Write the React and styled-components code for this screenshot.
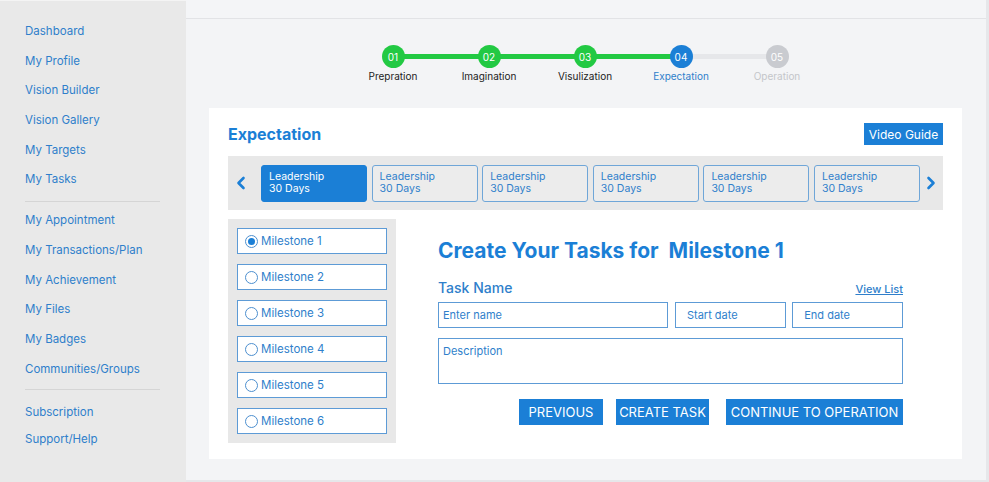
import React from 'react';
import styled, { createGlobalStyle } from 'styled-components';

const GlobalStyle = createGlobalStyle`
  html, body { margin: 0; padding: 0; }
  body {
    font-family: Inter, "Noto Sans", sans-serif;
    background: #f3f4f6;
  }
  * { box-sizing: border-box; }
`;

const BLUE = '#1b7fd6';
const TEXT_BLUE = '#2f7fcb';

const Page = styled.div`
  display: flex;
  width: 989px;
  height: 482px;
  overflow: hidden;
`;

const Sidebar = styled.nav`
  width: 186px;
  flex-shrink: 0;
  background: #e9e9e9;
  padding: 21px 0 0 25px;
  border-top: 1px solid #f4f4f4;
`;

const NavItem = styled.div`
  font-size: 11.5px;
  color: ${TEXT_BLUE};
  height: ${(p) => p.h || 29.7}px;
  line-height: 18px;
  white-space: nowrap;
`;

const Divider = styled.div`
  width: 135px;
  height: 1px;
  background: #d5d5d5;
  margin: ${(p) => p.m};
`;

const Main = styled.main`
  width: 803px;
  min-width: 0;
  display: flex;
  flex-direction: column;
  border-right: 3px solid #e6e7ea;
  border-bottom: 2px solid #e6e7ea;
`;

const TopBar = styled.div`
  height: 19px;
  border-bottom: 1px solid #e2e3e6;
  background: #f4f5f7;
`;

const Stepper = styled.div`
  display: flex;
  justify-content: center;
  padding: 26px 2px 0 0;
  height: 89px;
`;

const Step = styled.div`
  width: 96px;
  display: flex;
  flex-direction: column;
  align-items: center;
  position: relative;
`;

const Connector = styled.div`
  position: absolute;
  top: 9px;
  left: 48px;
  width: 96px;
  height: 5px;
  background: ${(p) => (p.done ? '#22c943' : '#e6e7ea')};
`;

const Circle = styled.div`
  width: 23px;
  height: 23px;
  border-radius: 50%;
  background: ${(p) => p.bg};
  color: #fff;
  font-size: 10px;
  display: flex;
  align-items: center;
  justify-content: center;
  position: relative;
  z-index: 1;
`;

const StepLabel = styled.div`
  margin-top: 2px;
  font-size: 10px;
  color: ${(p) => p.color};
`;

const Card = styled.section`
  margin-left: 23px;
  width: 753px;
  background: #fff;
  height: 351px;
  padding: 12px 19px 0 19px;
`;

const CardHeader = styled.div`
  display: flex;
  justify-content: space-between;
  align-items: center;
  height: 28px;
`;

const Title = styled.h2`
  margin: 0;
  font-size: 16px;
  font-weight: 700;
  color: ${BLUE};
`;

const BlueButton = styled.button`
  border: none;
  background: ${BLUE};
  color: #fff;
  font-family: inherit;
  font-size: ${(p) => p.size || 13}px;
  height: ${(p) => p.h || 26}px;
  padding: 0;
  width: ${(p) => p.w}px;
  margin-left: ${(p) => p.ml || 0}px;
  white-space: nowrap;
  cursor: pointer;
`;

const Carousel = styled.div`
  margin-top: 8px;
  height: 54px;
  background: #e8e8e8;
  display: flex;
  align-items: center;
`;

const Arrow = styled.div`
  width: ${(p) => p.w}px;
  display: flex;
  justify-content: ${(p) => p.justify};
  padding: 0 ${(p) => p.pad}px;
  color: ${BLUE};
`;

const Tabs = styled.div`
  display: flex;
  gap: 4.6px;
`;

const Tab = styled.div`
  width: 106px;
  height: 37px;
  border-radius: 3px;
  border: 1px solid ${(p) => (p.active ? BLUE : '#6fa6d8')};
  background: ${(p) => (p.active ? BLUE : '#ececec')};
  color: ${(p) => (p.active ? '#fff' : TEXT_BLUE)};
  font-size: 10.5px;
  line-height: 12.5px;
  padding: 5px 7px;
`;

const Body = styled.div`
  display: flex;
  margin-top: 9px;
`;

const MilestonePanel = styled.div`
  width: 168px;
  height: 224px;
  background: #e8e8e8;
  padding: 9px 9px;
  display: flex;
  flex-direction: column;
  gap: 10px;
`;

const Milestone = styled.label`
  height: 26px;
  background: #fff;
  border: 1px solid #5d9bd6;
  display: flex;
  align-items: center;
  padding-left: 7px;
  font-size: 11.5px;
  color: ${TEXT_BLUE};
  gap: 3px;
`;

const Radio = styled.span`
  width: 13px;
  height: 13px;
  border-radius: 50%;
  border: 1px solid #4d8fcf;
  display: flex;
  align-items: center;
  justify-content: center;
  &::after {
    content: '';
    width: 7px;
    height: 7px;
    border-radius: 50%;
    background: ${(p) => (p.checked ? BLUE : 'transparent')};
  }
`;

const Form = styled.div`
  margin-left: 42px;
  width: 465px;
  padding-top: 19px;
`;

const FormTitle = styled.h3`
  margin: 0;
  font-size: 21px;
  font-weight: 700;
  color: ${BLUE};
  height: 38px;
  white-space: pre;
`;

const LabelRow = styled.div`
  display: flex;
  justify-content: space-between;
  align-items: flex-end;
  height: 23px;
  padding-bottom: 3px;
`;

const FieldLabel = styled.div`
  font-size: 14px;
  font-weight: 500;
  color: ${TEXT_BLUE};
`;

const ViewLink = styled.a`
  font-size: 11px;
  color: ${TEXT_BLUE};
  text-decoration: underline;
  font-weight: 500;
`;

const InputRow = styled.div`
  display: flex;
  gap: 6.5px;
  margin-top: ${(p) => p.mt || 3}px;
`;

const Input = styled.div`
  width: ${(p) => p.w}px;
  height: ${(p) => p.h || 26}px;
  border: 1px solid #5d9bd6;
  font-size: 11px;
  color: ${TEXT_BLUE};
  padding: ${(p) => (p.pad ? '5px 11px' : '5px 4px')};
  line-height: 14px;
`;

const Actions = styled.div`
  display: flex;
  justify-content: flex-end;
  gap: 13px;
  margin-top: 15px;
`;

const navTop = ['Dashboard', 'My Profile', 'Vision Builder', 'Vision Gallery', 'My Targets', 'My Tasks'];
const navMid = ['My Appointment', 'My Transactions/Plan', 'My Achievement', 'My Files', 'My Badges', 'Communities/Groups'];

const steps = [
  { n: '01', label: 'Prepration', state: 'done' },
  { n: '02', label: 'Imagination', state: 'done' },
  { n: '03', label: 'Visulization', state: 'done' },
  { n: '04', label: 'Expectation', state: 'current' },
  { n: '05', label: 'Operation', state: 'todo' },
];

const stepColor = { done: '#22c943', current: '#1b7fd6', todo: '#c9cbd0' };
const labelColor = { done: '#222', current: '#2f7fcb', todo: '#c4c6ca' };

const Chevron = ({ dir }) => (
  <svg width="12" height="14" viewBox="0 0 12 14" fill="none">
    <path
      d={dir === 'left' ? 'M8.5 2 L3.5 7 L8.5 12' : 'M3.5 2 L8.5 7 L3.5 12'}
      stroke="currentColor"
      strokeWidth="2.6"
      strokeLinecap="round"
      strokeLinejoin="round"
    />
  </svg>
);

export default function App() {
  return (
    <Page>
      <GlobalStyle />
      <Sidebar>
        {navTop.map((n) => <NavItem key={n}>{n}</NavItem>)}
        <Divider m="1px 0 9px" />
        {navMid.map((n) => <NavItem key={n}>{n}</NavItem>)}
        <Divider m="0 0 13px" />
        <NavItem h={27}>Subscription</NavItem>
        <NavItem>Support/Help</NavItem>
      </Sidebar>
      <Main>
        <TopBar />
        <Stepper>
          {steps.map((s, i) => (
            <Step key={s.n}>
              {i < steps.length - 1 && <Connector done={steps[i + 1].state !== 'todo'} />}
              <Circle bg={stepColor[s.state]}>{s.n}</Circle>
              <StepLabel color={labelColor[s.state]}>{s.label}</StepLabel>
            </Step>
          ))}
        </Stepper>
        <Card>
          <CardHeader>
            <Title>Expectation</Title>
            <BlueButton size={12} h={22} w={79}>Video Guide</BlueButton>
          </CardHeader>
          <Carousel>
            <Arrow w={33} pad={7} justify="flex-start"><Chevron dir="left" /></Arrow>
            <Tabs>
              {[0, 1, 2, 3, 4, 5].map((i) => (
                <Tab key={i} active={i === 0}>Leadership<br />30 Days</Tab>
              ))}
            </Tabs>
            <Arrow w={23} pad={0} justify="center"><Chevron dir="right" /></Arrow>
          </Carousel>
          <Body>
            <MilestonePanel>
              {[1, 2, 3, 4, 5, 6].map((i) => (
                <Milestone key={i}>
                  <Radio checked={i === 1} />
                  Milestone {i}
                </Milestone>
              ))}
            </MilestonePanel>
            <Form>
              <FormTitle>Create Your Tasks for  Milestone 1</FormTitle>
              <LabelRow>
                <FieldLabel>Task Name</FieldLabel>
                <ViewLink>View List</ViewLink>
              </LabelRow>
              <InputRow>
                <Input w={231}>Enter name</Input>
                <Input w={111} pad>Start date</Input>
                <Input w={111} pad>End date</Input>
              </InputRow>
              <InputRow mt={10}>
                <Input w={465} h={46}>Description</Input>
              </InputRow>
              <Actions>
                <BlueButton w={84}>PREVIOUS</BlueButton>
                <BlueButton w={93}>CREATE TASK</BlueButton>
                <BlueButton w={177} ml={4}>CONTINUE TO OPERATION</BlueButton>
              </Actions>
            </Form>
          </Body>
        </Card>
      </Main>
    </Page>
  );
}
